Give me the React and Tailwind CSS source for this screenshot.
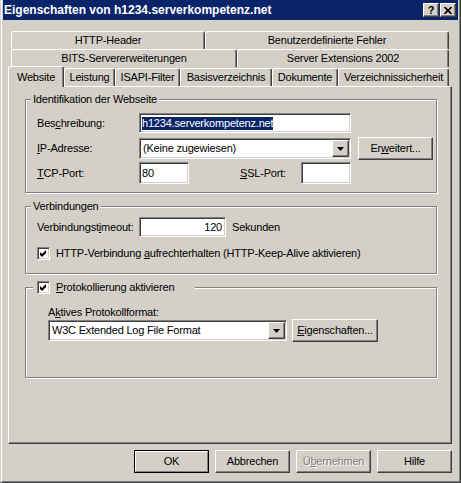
const FONT = "font-['Liberation_Sans',Arial,sans-serif]";
const raised =
  "border border-t-white border-l-white border-r-[#404040] border-b-[#404040] shadow-[inset_-1px_-1px_0_#808080]";
const sunken =
  "border border-t-[#808080] border-l-[#808080] border-r-white border-b-white shadow-[inset_1px_1px_0_#404040,inset_-1px_-1px_0_#d4d0c8]";
const etched = "border border-[#808080] shadow-[inset_1px_1px_0_white,1px_1px_0_white]";

function U({ children }) {
  return <span className="underline underline-offset-[1px] decoration-1">{children}</span>;
}

function Button({ children, className = "", def = false, disabled = false }) {
  if (def) {
    return (
      <div className={`w-[75px] h-[23px] border border-black ${className}`}>
        <div className="h-full border border-t-white border-l-white border-r-[#808080] border-b-[#808080] flex items-center justify-center">
          {children}
        </div>
      </div>
    );
  }
  return (
    <div
      className={`h-[23px] ${raised} flex items-center justify-center ${
        disabled ? "text-[#808080] [text-shadow:1px_1px_0_white]" : ""
      } ${className}`}
    >
      {children}
    </div>
  );
}

function TextBox({ className = "", children, right = false }) {
  return (
    <div
      className={`${sunken} h-[20px] bg-white flex items-center px-[2px] ${
        right ? "justify-end pr-[3px]" : ""
      } ${className}`}
    >
      {children}
    </div>
  );
}

function Combo({ className = "", children }) {
  return (
    <div className={`${sunken} h-[21px] bg-white flex p-[1px] ${className}`}>
      <div className="flex-1 flex items-center pl-[2px]">{children}</div>
      <div className={`w-[17px] h-full bg-[#d4d0c8] ${raised} flex items-center justify-center`}>
        <svg width="7" height="4" viewBox="0 0 7 4">
          <polygon points="0,0 7,0 3.5,4" fill="black" />
        </svg>
      </div>
    </div>
  );
}

function CheckBox() {
  return (
    <div className={`${sunken} w-[13px] h-[13px] bg-white flex items-center justify-center shrink-0`}>
      <svg width="7" height="7" viewBox="0 0 7 7">
        <polygon points="0,2 2,4 6,0 6,3 2,7 0,5" fill="black" />
      </svg>
    </div>
  );
}

function Tab({ label, className = "", selected = false }) {
  return (
    <div
      className={`border-l border-t border-r border-l-white border-t-white border-r-[#404040] rounded-tl-[3px] rounded-tr-[3px] shadow-[inset_-1px_0_0_#808080] bg-[#d4d0c8] flex justify-center shrink-0 ${
        selected ? "relative z-10 h-[21px] -mb-px pt-[2px] items-start" : "h-[18px] items-center"
      } ${className}`}
    >
      {label}
    </div>
  );
}

function TitleBar() {
  return (
    <div className="h-[20px] bg-[#0a246a] flex items-center justify-between pl-[1px] pr-[2px]">
      <span className="text-white font-bold text-[12px] tracking-normal leading-none">
        Eigenschaften von h1234.serverkompetenz.net
      </span>
      <div className="flex gap-[1px]">
        <div className={`w-[16px] h-[14px] bg-[#d4d0c8] ${raised} flex items-center justify-center font-bold text-[11px] leading-none`}>
          ?
        </div>
        <div className={`w-[16px] h-[14px] bg-[#d4d0c8] ${raised} flex items-center justify-center`}>
          <svg width="8" height="7" viewBox="0 0 8 7">
            <path d="M0.5 0 L7.5 7 M7.5 0 L0.5 7" stroke="black" strokeWidth="1.6" />
          </svg>
        </div>
      </div>
    </div>
  );
}

function Tabs() {
  return (
    <div className="flex flex-col">
      <div className="flex pl-[3px] h-[18px]">
        <Tab label="HTTP-Header" className="w-[194px]" />
        <Tab label="Benutzerdefinierte Fehler" className="w-[244px]" />
      </div>
      <div className="flex pl-[3px] h-[18px]">
        <Tab label="BITS-Servererweiterungen" className="w-[226px]" />
        <Tab label="Server Extensions 2002" className="w-[212px]" />
      </div>
      <div className="flex items-end h-[19px]">
        <Tab label="Website" className="w-[56px]" selected />
        <Tab label="Leistung" className="w-[51px]" />
        <Tab label="ISAPI-Filter" className="w-[65px]" />
        <Tab label="Basisverzeichnis" className="w-[92px]" />
        <Tab label="Dokumente" className="w-[66px]" />
        <Tab label="Verzeichnissicherheit" className="w-[111px]" />
      </div>
    </div>
  );
}

function Panel() {
  return (
    <div className={`h-[358px] ${raised} pl-[16px] flex flex-col`}>
      {/* Identifikation */}
      <fieldset className={`mt-[6px] w-[412px] h-[100px] ${etched}`}>
        <legend className="ml-[5px] px-[2px] bg-[#d4d0c8] leading-[13px]">Identifikation der Webseite</legend>
        <div className="pl-[11px] flex flex-col">
          <div className="mt-[7px] flex items-center">
            <span className="w-[102px]">
              Bes<U>c</U>hreibung:
            </span>
            <TextBox className="w-[212px]">
              <span className="bg-[#0a246a] text-white leading-[13px]">h1234.serverkompetenz.net</span>
            </TextBox>
          </div>
          <div className="mt-[4px] flex items-center h-[23px]">
            <span className="w-[102px]">
              <U>I</U>P-Adresse:
            </span>
            <Combo className="w-[212px]">(Keine zugewiesen)</Combo>
            <Button className="w-[75px] ml-[7px]">
              <span>
                Er<U>w</U>eitert...
              </span>
            </Button>
          </div>
          <div className="mt-[2px] flex items-center">
            <span className="w-[102px]">
              <U>T</U>CP-Port:
            </span>
            <TextBox className="w-[50px] h-[22px]">80</TextBox>
            <span className="ml-[51px] w-[61px]">
              <U>S</U>SL-Port:
            </span>
            <TextBox className="w-[50px] h-[22px]" />
          </div>
        </div>
      </fieldset>

      {/* Verbindungen */}
      <fieldset className={`mt-[7px] w-[412px] h-[74px] ${etched}`}>
        <legend className="ml-[5px] px-[2px] bg-[#d4d0c8] leading-[13px]">Verbindungen</legend>
        <div className="pl-[11px] flex flex-col">
          <div className="mt-[4px] flex items-center">
            <span className="w-[102px]">
              Verbindungst<U>i</U>meout:
            </span>
            <TextBox className="w-[87px]" right>
              120
            </TextBox>
            <span className="ml-[6px]">Sekunden</span>
          </div>
          <div className="mt-[8px] flex items-center gap-[6px]">
            <CheckBox />
            <span>
              HTTP-Verbindung <U>a</U>ufrechterhalten (HTTP-Keep-Alive aktivieren)
            </span>
          </div>
        </div>
      </fieldset>

      {/* Protokollierung */}
      <fieldset className={`mt-[7px] w-[412px] h-[97px] ${etched}`}>
        <legend className="ml-[7px] pl-[4px] w-[162px] bg-[#d4d0c8] flex items-center gap-[6px] leading-[13px]">
          <CheckBox />
          <span>
            <U>P</U>rotokollierung aktivieren
          </span>
        </legend>
        <div className="pl-[22px] flex flex-col">
          <div className="mt-[12px] leading-[13px]">
            A<U>k</U>tives Protokollformat:
          </div>
          <div className="flex items-center h-[23px]">
            <Combo className="w-[239px]">W3C Extended Log File Format</Combo>
            <Button className="w-[86px] ml-[5px]">
              <span>
                <U>E</U>igenschaften...
              </span>
            </Button>
          </div>
        </div>
      </fieldset>
    </div>
  );
}

export default function App() {
  return (
    <div
      className={`${FONT} w-[461px] h-[483px] bg-[#d4d0c8] text-[11px] tracking-[-0.2px] text-black border-l border-r border-b border-l-[#d4d0c8] border-r-[#404040] border-b-[#404040] shadow-[inset_1px_0_0_white,inset_-1px_-1px_0_#808080] px-[2px] flex flex-col`}
    >
      <TitleBar />
      <div className="pl-[5px] pr-[6px] pt-[11px]">
        <Tabs />
        <Panel />
        <div className="mt-[6px] flex justify-end gap-[6px]">
          <Button def>OK</Button>
          <Button className="w-[75px]">Abbrechen</Button>
          <Button className="w-[75px]" disabled>
            <span>
              Ü<U>b</U>ernehmen
            </span>
          </Button>
          <Button className="w-[75px]">Hilfe</Button>
        </div>
      </div>
    </div>
  );
}
